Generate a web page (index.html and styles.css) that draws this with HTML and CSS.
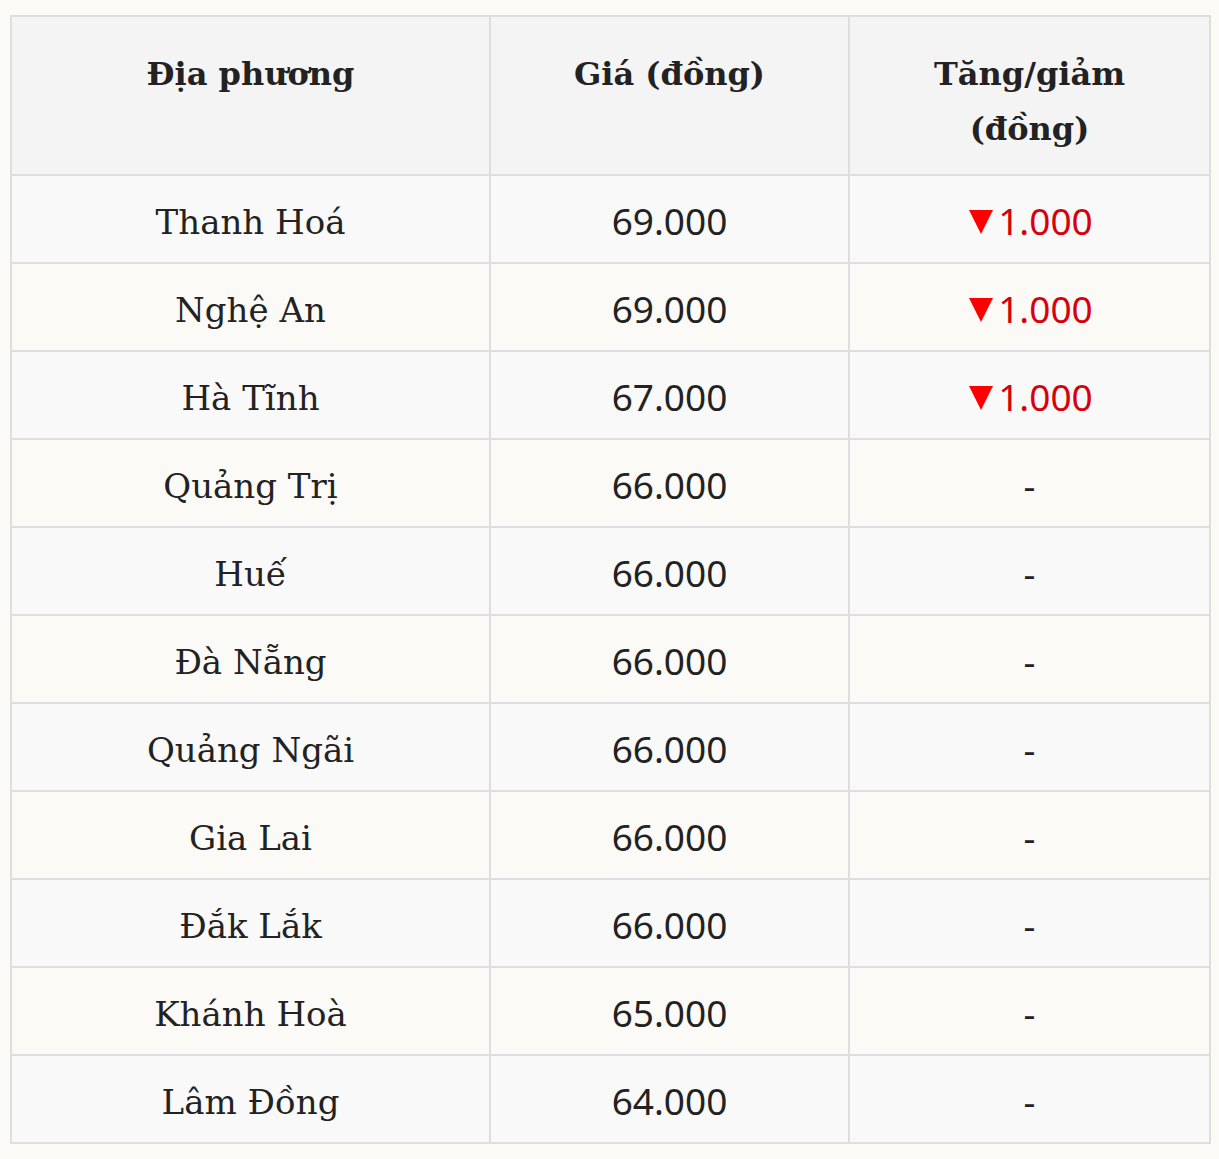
FILE: index.html
```html
<!DOCTYPE html>
<html lang="vi">
<head>
<meta charset="utf-8">
<link rel="stylesheet" href="styles.css">
</head>
<body>
<table class="price-table">
  <colgroup>
    <col class="c1"><col class="c2"><col class="c3">
  </colgroup>
  <thead>
    <tr><th>Địa phương</th><th>Giá (đồng)</th><th>Tăng/giảm<br>(đồng)</th></tr>
  </thead>
  <tbody>
    <tr><td>Thanh Hoá</td><td class="num">69.000</td><td class="num down"><span class="tri" aria-label="▼"></span>1.000</td></tr>
    <tr><td>Nghệ An</td><td class="num">69.000</td><td class="num down"><span class="tri" aria-label="▼"></span>1.000</td></tr>
    <tr><td>Hà Tĩnh</td><td class="num">67.000</td><td class="num down"><span class="tri" aria-label="▼"></span>1.000</td></tr>
    <tr><td>Quảng Trị</td><td class="num">66.000</td><td class="num">-</td></tr>
    <tr><td>Huế</td><td class="num">66.000</td><td class="num">-</td></tr>
    <tr><td>Đà Nẵng</td><td class="num">66.000</td><td class="num">-</td></tr>
    <tr><td>Quảng Ngãi</td><td class="num">66.000</td><td class="num">-</td></tr>
    <tr><td>Gia Lai</td><td class="num">66.000</td><td class="num">-</td></tr>
    <tr><td>Đắk Lắk</td><td class="num">66.000</td><td class="num">-</td></tr>
    <tr><td>Khánh Hoà</td><td class="num">65.000</td><td class="num">-</td></tr>
    <tr><td>Lâm Đồng</td><td class="num">64.000</td><td class="num">-</td></tr>
  </tbody>
</table>
</body>
</html>
```
FILE: styles.css
```css
html, body {
  margin: 0;
  padding: 0;
  background: #fbfaf6;
}
body {
  padding: 15px 10px 0 10px;
  font-family: "DejaVu Serif", "Liberation Serif", serif;
  color: #222;
}
.price-table {
  width: 1199px;
  border-collapse: collapse;
  table-layout: fixed;
}
.c1 { width: 479px; }
.c2 { width: 359px; }
.c3 { width: 361px; }
.price-table th,
.price-table td {
  border: 2px solid #dedede;
  text-align: center;
}
.price-table th {
  background: #f4f4f4;
  height: 159px;
  vertical-align: top;
  padding: 30px 10px 0 10px;
  font-size: 32px;
  line-height: 55px;
  font-weight: bold;
  box-sizing: border-box;
}
.price-table td {
  padding: 6px 10px 0 10px;
  font-size: 34px;
  vertical-align: middle;
  box-sizing: border-box;
  height: 88px;
}
.price-table tbody tr:nth-child(odd) td {
  background: #f9f9f9;
}
.price-table td.num {
  font-family: "Noto Sans", "Open Sans", sans-serif;
  font-size: 37px;
  padding-top: 3px;
}
.down {
  color: #d8000c;
}
.tri {
  display: inline-block;
  width: 0;
  height: 0;
  border-left: 12.5px solid transparent;
  border-right: 12.5px solid transparent;
  border-top: 24px solid #ff0000;
  margin-left: 3px;
  margin-right: 5px;
  vertical-align: 1px;
}
```
